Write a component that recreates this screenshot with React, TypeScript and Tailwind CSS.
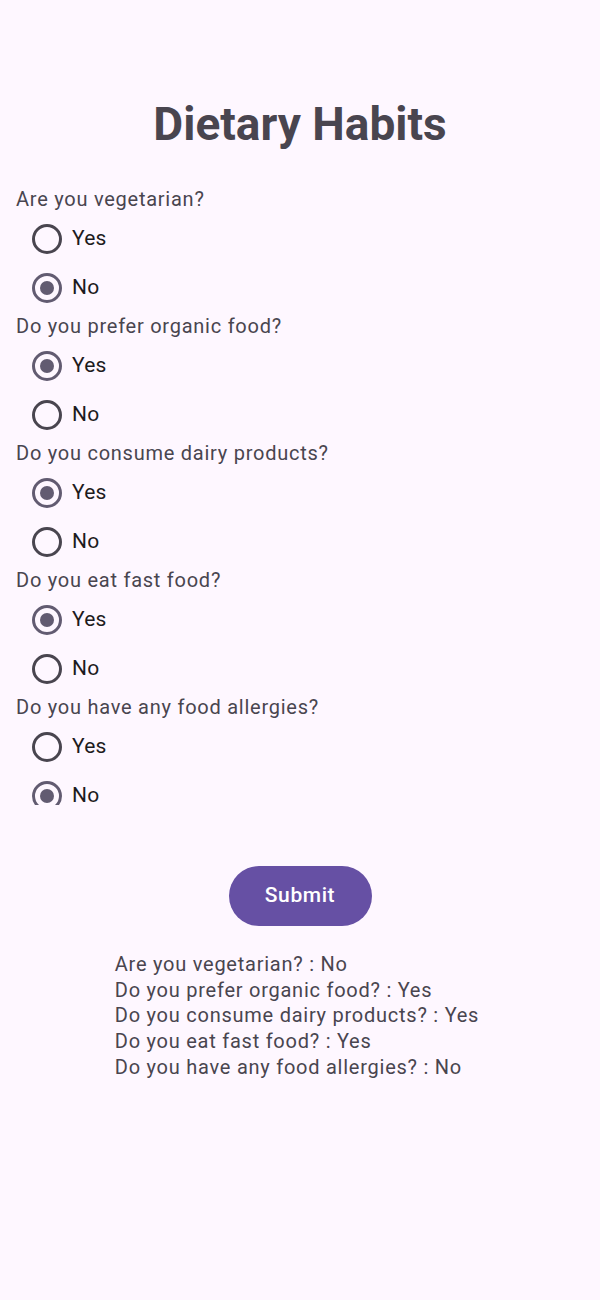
import React from "react";

const questions: { q: string; a: "Yes" | "No" }[] = [
  { q: "Are you vegetarian?", a: "No" },
  { q: "Do you prefer organic food?", a: "Yes" },
  { q: "Do you consume dairy products?", a: "Yes" },
  { q: "Do you eat fast food?", a: "Yes" },
  { q: "Do you have any food allergies?", a: "No" },
];

export default function App() {
  return (
    <div
      className="w-[600px] h-[1300px] bg-[#FEF7FF] flex flex-col"
      style={{ fontFamily: "Roboto, 'Noto Sans', sans-serif" }}
    >
      <h1 className="mt-[98px] h-[52px] leading-[52px] text-center text-[46px] font-bold text-[#49454F]">
        Dietary Habits
      </h1>
      <div className="mt-[35px] h-[620px] overflow-hidden flex flex-col">
        {questions.map((item) => (
          <div key={item.q} className="flex flex-col">
            <div className="pl-[16px] h-[29px] leading-[29px] text-[20px] tracking-[0.75px] text-[#49454F]">
              {item.q}
            </div>
            {(["Yes", "No"] as const).map((opt) => (
              <div key={opt} className="flex items-center h-[49px]">
                <div className="w-[32px]" />
                <div
                  className={
                    "w-[30px] h-[30px] rounded-full border-[3px] flex items-center justify-center shrink-0 " +
                    (item.a === opt ? "border-[#625B71]" : "border-[#49454F]")
                  }
                >
                  {item.a === opt && <div className="w-[14px] h-[14px] rounded-full bg-[#625B71]" />}
                </div>
                <span className="ml-[10px] text-[21px] tracking-[0.2px] text-[#1D1B20]">{opt}</span>
              </div>
            ))}
          </div>
        ))}
      </div>
      <div className="mt-[61px] flex justify-center">
        <button className="h-[60px] w-[143px] rounded-full bg-[#6650A4] text-white text-[21px] tracking-[0.6px] font-medium">
          Submit
        </button>
      </div>
      <div className="mt-[26px] flex justify-center">
        <div className="flex flex-col pr-[6px]">
          {questions.map((item) => (
            <div key={item.q} className="text-[20px] leading-[25.7px] tracking-[0.75px] text-[#49454F]">
              {item.q} : {item.a}
            </div>
          ))}
        </div>
      </div>
    </div>
  );
}
